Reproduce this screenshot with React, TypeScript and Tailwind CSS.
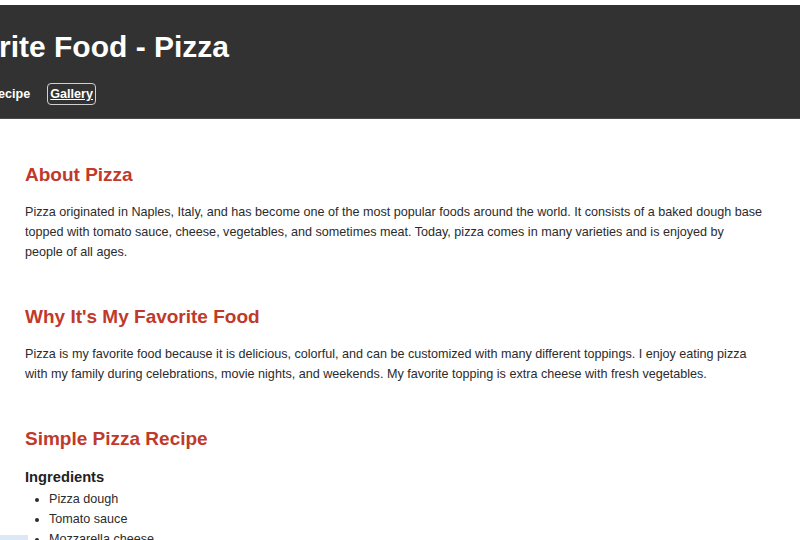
import React from 'react';

const navLinks = ['About', 'Why', 'Recipe', 'Gallery'];

const ingredients = ['Pizza dough', 'Tomato sauce', 'Mozzarella cheese', 'Vegetables', 'Olive oil'];

export default function App() {
  return (
    <div
      className="min-h-[540px] bg-white pt-[5px] text-[#2b2b2b] overflow-hidden"
      style={{ fontFamily: '"Liberation Sans", Arial, sans-serif' }}
    >
      {/* Header */}
      <header className="h-[114px] bg-[#323232] border-b border-[#4a4a4a] overflow-hidden">
        <div className="-ml-[121px] pt-[27px]">
          <h1 className="text-[30px] leading-[30px] font-bold text-white whitespace-nowrap">
            My Favorite Food - Pizza
          </h1>
          <nav className="mt-[22px] ml-[7px] flex gap-[20px] whitespace-nowrap">
            {navLinks.map((l) =>
              l === 'Gallery' ? (
                <a
                  key={l}
                  href="#gallery"
                  className="text-[12.6px] leading-[20px] font-bold text-white underline px-[2px] -mx-[2px] rounded-[3px] outline outline-1 outline-[#d0d0d0]"
                >
                  {l}
                </a>
              ) : (
                <a key={l} href={`#${l.toLowerCase()}`} className="text-[12.6px] leading-[20px] font-bold text-white">
                  {l}
                </a>
              )
            )}
          </nav>
        </div>
      </header>

      <main className="pl-[25px] pr-[36px]">
        <section>
          <h2 className="mt-[44px] text-[19px] leading-[24px] font-bold text-[#c0392b]">About Pizza</h2>
          <p className="mt-[15px] text-[12.6px] leading-[20px]">
            Pizza originated in Naples, Italy, and has become one of the most popular foods around the world. It
            consists of a baked dough base topped with tomato sauce, cheese, vegetables, and sometimes meat. Today,
            pizza comes in many varieties and is enjoyed by people of all ages.
          </p>
        </section>

        <section>
          <h2 className="mt-[43px] text-[19px] leading-[24px] font-bold text-[#c0392b]">Why It's My Favorite Food</h2>
          <p className="mt-[15px] text-[12.6px] leading-[20px]">
            Pizza is my favorite food because it is delicious, colorful, and can be customized with many different
            toppings. I enjoy eating pizza with my family during celebrations, movie nights, and weekends. My favorite
            topping is extra cheese with fresh vegetables.
          </p>
        </section>

        <section>
          <h2 className="mt-[43px] text-[19px] leading-[24px] font-bold text-[#c0392b]">Simple Pizza Recipe</h2>
          <h3 className="mt-[16px] text-[14.7px] leading-[20px] font-bold text-[#222]">Ingredients</h3>
          <ul className="mt-[2px] pl-[24px] list-disc text-[12.6px] leading-[20px]">
            {ingredients.map((i) => (
              <li key={i}>{i}</li>
            ))}
          </ul>
        </section>
      </main>

      <div className="fixed left-0 top-[535px] w-[28px] h-[12px] bg-[#dde8f6]" />
    </div>
  );
}
